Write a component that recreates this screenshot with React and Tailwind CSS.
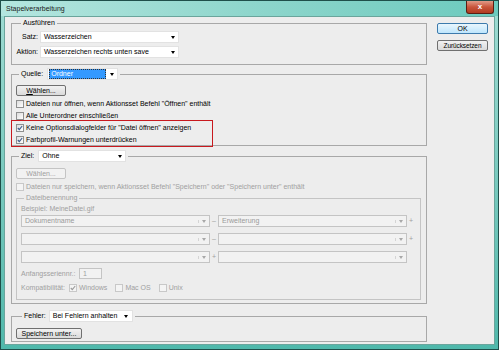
import React from 'react';

function Select({ value, className = '', disabled, highlight }) {
  return (
    <div
      className={`flex items-center h-[12px] border ${
        disabled ? 'border-[#c4c4c4] bg-[#f2f2f2] text-[#9a9a9a]' : 'border-[#e2e2e2] bg-white text-black'
      } ${className}`}
    >
      {highlight ? (
        <div className="ml-[1px] h-[10px] flex-1 flex items-center bg-[#3399ff] text-white pl-[2px] outline-1 outline-dotted outline-[#333] -outline-offset-1">
          {value}
        </div>
      ) : (
        <div className="flex-1 pl-[3px] truncate">{value}</div>
      )}
      <div className={`w-[11px] flex justify-center ${disabled ? 'border-l border-[#d4d4d4]' : ''}`}>
        <div
          className={`w-0 h-0 border-l-[2.5px] border-r-[2.5px] border-t-[3px] border-l-transparent border-r-transparent ${
            disabled ? 'border-t-[#a8a8a8]' : 'border-t-black'
          }`}
        />
      </div>
    </div>
  );
}

function Checkbox({ checked, disabled, label, className = '' }) {
  return (
    <div className={`flex items-center gap-[2px] ${disabled ? 'text-[#a0a0a0]' : 'text-black'} ${className}`}>
      <div
        className={`w-[8px] h-[8px] border flex items-center justify-center ${
          disabled ? 'border-[#c8c8c8] bg-[#f4f4f4]' : 'border-[#8e8f8f] bg-gradient-to-br from-[#dcdcdc] to-white'
        }`}
      >
        {checked && (
          <svg width="6" height="6" viewBox="0 0 6 6">
            <path d="M0.8 3 L2.3 4.6 L5.2 1" fill="none" stroke={disabled ? '#9a9a9a' : '#3c5a8a'} strokeWidth="1.1" />
          </svg>
        )}
      </div>
      <span>{label}</span>
    </div>
  );
}

function Button({ children, className = '', disabled, primary }) {
  return (
    <div
      className={`h-[11px] flex items-center justify-center rounded-[2px] border ${
        disabled
          ? 'border-[#c4c4c4] bg-[#f2f2f2] text-[#a0a0a0]'
          : primary
          ? 'border-[#3d7bad] bg-gradient-to-b from-[#eaf6fd] to-[#bee6fd] text-black'
          : 'border-[#707070] bg-gradient-to-b from-[#f2f2f2] to-[#dadada] text-black'
      } ${className}`}
    >
      {children}
    </div>
  );
}

export default function App() {
  return (
    <div className="w-[499px] h-[350px] flex flex-col bg-gradient-to-b from-[#9fdcd3] to-[#4fb8ab] border border-[#1f4f4a] font-['Liberation_Sans',sans-serif] text-[7px] leading-[10px] text-black overflow-hidden">
      {/* Titelleiste */}
      <div className="h-[15px] flex items-start bg-gradient-to-r from-[#b4e6df] via-[#8ed6cc] to-[#6ccabe]">
        <div className="pl-[5px] pt-[3px] text-[7px] leading-[9px] text-[#1a1a1a]">Stapelverarbeitung</div>
        <div className="ml-auto mr-[4px] w-[28px] h-[13px] rounded-b-[3px] border border-t-0 border-[#5a1d12] bg-gradient-to-b from-[#e19a87] via-[#c9553b] to-[#b03a20] flex items-center justify-center">
          <span className="text-white text-[8px] leading-[8px] font-bold">x</span>
        </div>
      </div>

      <div className="flex-1 mx-[3px] mb-[4px] bg-[#ededed] border border-[#6aa59c] flex">
        {/* linke Spalte */}
        <div className="w-[422px] pl-[6px] flex flex-col">
          {/* Ausführen */}
          <fieldset className="mt-[1px] h-[47px] border border-[#a8a8a8] px-[3px]">
            <legend className="ml-[6px] px-[2px]">Ausführen</legend>
            <div className="flex flex-col gap-[3px] mt-[3px]">
              <div className="flex items-center">
                <span className="w-[25px] text-right pr-[2px]">Satz:</span>
                <Select value="Wasserzeichen" className="w-[139px]" />
              </div>
              <div className="flex items-center">
                <span className="w-[25px] text-right pr-[2px]">Aktion:</span>
                <Select value="Wasserzeichen rechts unten save" className="w-[139px]" />
              </div>
            </div>
          </fieldset>

          {/* Quelle */}
          <fieldset className="mt-[3px] h-[78px] border border-[#a8a8a8] px-[4px] relative">
            <legend className="ml-[3px] px-[2px] flex items-center gap-[4px]">
              <span>Quelle:</span>
              <Select value="Ordner" highlight className="w-[71px]" />
            </legend>
            <Button className="mt-[5px] w-[50px]">
              <span>
                <u>W</u>ählen...
              </span>
            </Button>
            <div className="flex flex-col mt-[2px]">
              <Checkbox className="h-[12px]" label="Dateien nur öffnen, wenn Aktionsset Befehl &quot;Öffnen&quot; enthält" />
              <Checkbox className="h-[12px]" label="Alle Unterordner einschließen" />
              <Checkbox className="h-[12px]" checked label='Keine Optionsdialogfelder für "Datei öffnen" anzeigen' />
              <Checkbox className="h-[12px]" checked label="Farbprofil-Warnungen unterdrücken" />
            </div>
            {/* rote Markierung */}
            <div className="absolute left-[-1px] top-[40px] w-[202px] h-[27px] border-[1.5px] border-[#c8191e]" />
          </fieldset>

          {/* Ziel */}
          <fieldset className="mt-[4px] h-[154px] border border-[#a8a8a8] pl-[4px] pr-[5px]">
            <legend className="ml-[3px] px-[2px] flex items-center gap-[4px]">
              <span>Ziel:</span>
              <Select value="Ohne" className="w-[88px]" />
            </legend>
            <Button disabled className="mt-[6px] w-[50px]">
              Wählen...
            </Button>
            <Checkbox
              disabled
              className="h-[12px] mt-[2px]"
              label='Dateien nur speichern, wenn Aktionsset Befehl "Speichern" oder "Speichern unter" enthält'
            />
            <fieldset className="h-[107px] border border-[#c4c4c4] px-[4px] text-[#a0a0a0]">
              <legend className="ml-[3px] px-[2px]">Dateibenennung</legend>
              <div className="mt-[1px]">Beispiel: MeineDatei.gif</div>
              <div className="flex flex-col gap-[6px] mt-[1px]">
                <div className="flex items-center">
                  <Select disabled value="Dokumentname" className="w-[189px]" />
                  <span className="w-[8px] text-center">–</span>
                  <Select disabled value="Erweiterung" className="w-[189px]" />
                  <span className="w-[8px] text-center">+</span>
                </div>
                <div className="flex items-center">
                  <Select disabled value="" className="w-[189px]" />
                  <span className="w-[8px] text-center">–</span>
                  <Select disabled value="" className="w-[189px]" />
                  <span className="w-[8px] text-center">+</span>
                </div>
                <div className="flex items-center">
                  <Select disabled value="" className="w-[189px]" />
                  <span className="w-[8px] text-center">+</span>
                  <Select disabled value="" className="w-[189px]" />
                </div>
              </div>
              <div className="flex items-center mt-[5px]">
                <span className="w-[58px]">Anfangsseriennr.:</span>
                <div className="w-[23px] h-[11px] border border-[#c4c4c4] bg-[#f2f2f2] pl-[3px] leading-[9px]">1</div>
              </div>
              <div className="flex items-center gap-[4px] mt-[4px]">
                <span>Kompatibilität:</span>
                <Checkbox disabled checked label="Windows" />
                <Checkbox disabled label="Mac OS" className="ml-[4px]" />
                <Checkbox disabled label="Unix" className="ml-[4px]" />
              </div>
            </fieldset>
          </fieldset>

          {/* Fehler */}
          <fieldset className="mt-[6px] h-[32px] border border-[#a8a8a8] px-[4px]">
            <legend className="ml-[6px] px-[2px] flex items-center gap-[3px]">
              <span>Fehler:</span>
              <Select value="Bei Fehlern anhalten" className="w-[84px]" />
            </legend>
            <Button className="mt-[6px] w-[66px] text-[#333]">Speichern unter...</Button>
          </fieldset>
        </div>

        {/* rechte Spalte */}
        <div className="ml-[10px] pt-[6px] flex flex-col gap-[6px]">
          <Button primary className="w-[51px]">
            OK
          </Button>
          <Button className="w-[51px] text-[6.5px] tracking-[-0.1px]">Zurücksetzen</Button>
        </div>
      </div>
    </div>
  );
}
